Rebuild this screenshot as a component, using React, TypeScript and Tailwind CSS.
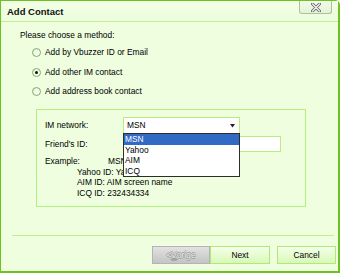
import React from "react";

const font = { fontFamily: '"Liberation Sans", Arial, sans-serif' };

function Radio({ checked }: { checked?: boolean }) {
  return (
    <div className="w-[9px] h-[9px] rounded-full border border-[#7fae5c] bg-gradient-to-br from-[#e6eedd] to-white flex items-center justify-center">
      {checked && <div className="w-[3px] h-[3px] rounded-full bg-[#111]" />}
    </div>
  );
}

export default function App() {
  return (
    <div className="w-[340px] h-[273px] bg-white" style={font}>
      <div className="w-[340px] h-[273px] border-l border-t border-r-2 border-b-2 border-[#6cc21e] rounded-tr-[5px] bg-[#eefedf] flex flex-col text-[8.4px] text-black">
        {/* title bar */}
        <div className="h-[21px] border-b border-[#c0ee98] flex items-start bg-gradient-to-b from-[#f2ffe6] to-[#ecfcdc]">
          <div className="pl-[6px] pt-[5px] font-bold text-[9.5px] leading-[12px] text-[#111]">Add Contact</div>
          <div className="ml-auto mr-[6px] w-[33px] h-[13px] border border-t-0 border-[#a9c39a] rounded-b-[3px] bg-gradient-to-b from-[#f3fbea] to-[#e4f3d5] flex items-center justify-center">
            <svg width="10" height="9" viewBox="0 0 10 9">
              <path d="M1.5 1 L8.5 8 M8.5 1 L1.5 8" stroke="#6b6b6b" strokeWidth="3" strokeLinecap="round" />
              <path d="M1.5 1 L8.5 8 M8.5 1 L1.5 8" stroke="#f4f4f4" strokeWidth="1.2" strokeLinecap="round" />
            </svg>
          </div>
        </div>
        {/* content */}
        <div className="flex-1 flex flex-col pl-[19px]">
          <div className="mt-[7px] h-[12px] flex items-center">Please choose a method:</div>
          <div className="mt-[5px] ml-[12px] h-[12px] flex items-center gap-[4px]">
            <Radio />
            <span>Add by Vbuzzer ID or Email</span>
          </div>
          <div className="mt-[8px] ml-[12px] h-[12px] flex items-center gap-[4px]">
            <Radio checked />
            <span>Add other IM contact</span>
          </div>
          <div className="mt-[7px] ml-[12px] h-[12px] flex items-center gap-[4px]">
            <Radio />
            <span>Add address book contact</span>
          </div>
          {/* group box */}
          <div className="mt-[12px] ml-[16px] w-[270px] h-[98px] border border-[#b3f07c] flex flex-col pl-[8px]">
            <div className="mt-[7px] h-[17px] flex items-center">
              <div className="w-[78px]">IM network:</div>
              <div className="relative">
                <div className="w-[117px] h-[17px] bg-white border border-[#b6ef80] flex items-center pl-[3px] pr-[4px]">
                  <span>MSN</span>
                  <svg className="ml-auto" width="5" height="4" viewBox="0 0 5 4">
                    <path d="M0 0 H5 L2.5 3.5 Z" fill="#222" />
                  </svg>
                </div>
                <div className="absolute left-0 top-[16px] w-[117px] h-[44px] bg-white border border-[#2d2d2d] z-10 flex flex-col leading-[10.5px]">
                  <div className="h-[10.5px] bg-[#316ac5] text-white pl-[1px]">MSN</div>
                  <div className="h-[10.5px] pl-[1px]">Yahoo</div>
                  <div className="h-[10.5px] pl-[1px]">AIM</div>
                  <div className="h-[10.5px] pl-[1px]">ICQ</div>
                </div>
              </div>
            </div>
            <div className="mt-[2px] h-[16px] flex items-center">
              <div className="w-[78px]">Friend's ID:</div>
              <div className="w-[158px] h-[16px] bg-white border border-[#b6ef80]" />
            </div>
            <div className="mt-[4px] flex flex-col leading-[10.5px]">
              <div className="h-[10.5px] flex">
                <span className="w-[63px]">Example:</span>
                <span>MSN ID: name@hotmail.com</span>
              </div>
              <div className="h-[10.5px] pl-[32px]">Yahoo ID: Yahoo screen name</div>
              <div className="h-[10.5px] pl-[32px]">AIM ID: AIM screen name</div>
              <div className="h-[10.5px] pl-[32px]">ICQ ID: 232434334</div>
            </div>
          </div>
        </div>
        {/* footer */}
        <div className="flex flex-col">
          <div className="ml-[11px] w-[322px] h-[1px] bg-[#bff08c]" />
          <div className="mt-[10px] mb-[7px] h-[18px] flex justify-end pr-[2px]">
            <div className="w-[58px] h-[18px] border border-[#b4b4b4] bg-gradient-to-b from-[#e2e2e2] to-[#c4c4c4] flex items-center justify-center text-[#ececec] [text-shadow:-0.6px_0_#9a9a9a,0.6px_0_#9a9a9a,0_0.6px_#9a9a9a,0_-0.6px_#9a9a9a]">
              <span>&lt;</span>
              <span className="underline decoration-[#a0a0a0]">V</span>
              <span>orige</span>
            </div>
            <div className="w-[60px] h-[18px] border border-[#aeea74] bg-gradient-to-b from-[#f4ffe9] to-[#d8f8b8] flex items-center justify-center">
              Next
            </div>
            <div className="ml-[7px] w-[59px] h-[18px] border border-[#aeea74] bg-gradient-to-b from-[#f4ffe9] to-[#d8f8b8] flex items-center justify-center">
              Cancel
            </div>
          </div>
        </div>
      </div>
    </div>
  );
}
